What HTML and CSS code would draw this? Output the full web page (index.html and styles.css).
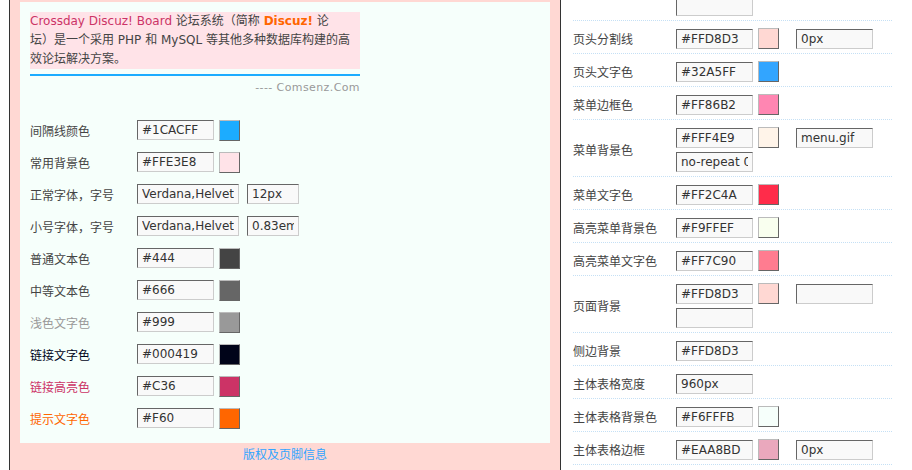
FILE: index.html
```html
<!DOCTYPE html>
<html lang="zh-CN">
  <head>
    <meta charset="UTF-8" />
    <title>风格设置</title>
    <link rel="stylesheet" href="styles.css">
  </head>
  <body>
    <div class="page">
      <div class="side">
        <div class="panel">
          <div class="intro">
            <span class="brand">Crossday Discuz! Board</span> 论坛系统（简称 <b class="hint">Discuz!</b> 论<br />
            坛）是一个采用 PHP 和 MySQL 等其他多种数据库构建的高<br />
            效论坛解决方案。
          </div>
          <div class="credit">---- Comsenz.Com</div>

          <div class="form">
            <div class="row">
              <span class="label">间隔线颜色</span>
              <input class="in" type="text" value="#1CACFF" />
              <span class="swatch" style="background:#1CACFF"></span>
            </div>
            <div class="row">
              <span class="label">常用背景色</span>
              <input class="in" type="text" value="#FFE3E8" />
              <span class="swatch" style="background:#FFE3E8"></span>
            </div>
            <div class="row">
              <span class="label">正常字体，字号</span>
              <input class="in wide" type="text" value="Verdana,Helvetica,Arial" />
              <input class="in small" type="text" value="12px" />
            </div>
            <div class="row">
              <span class="label">小号字体，字号</span>
              <input class="in wide" type="text" value="Verdana,Helvetica,Arial" />
              <input class="in small" type="text" value="0.83em" />
            </div>
            <div class="row">
              <span class="label">普通文本色</span>
              <input class="in" type="text" value="#444" />
              <span class="swatch" style="background:#444"></span>
            </div>
            <div class="row">
              <span class="label">中等文本色</span>
              <input class="in" type="text" value="#666" />
              <span class="swatch" style="background:#666"></span>
            </div>
            <div class="row">
              <span class="label light">浅色文字色</span>
              <input class="in" type="text" value="#999" />
              <span class="swatch" style="background:#999"></span>
            </div>
            <div class="row">
              <span class="label link">链接文字色</span>
              <input class="in" type="text" value="#000419" />
              <span class="swatch" style="background:#000419"></span>
            </div>
            <div class="row">
              <span class="label highlight">链接高亮色</span>
              <input class="in" type="text" value="#C36" />
              <span class="swatch" style="background:#C36"></span>
            </div>
            <div class="row">
              <span class="label hint">提示文字色</span>
              <input class="in" type="text" value="#F60" />
              <span class="swatch" style="background:#F60"></span>
            </div>
          </div>
        </div>
        <div class="foot">版权及页脚信息</div>
      </div>

      <div class="main">
        <!-- 上面的行已滚出窗口 -->
        <div class="item">
          <span class="label"></span>
          <div class="ctrl">
            <input class="in" type="text" value="" />
          </div>
        </div>
        <div class="item">
          <span class="label">页头分割线</span>
          <div class="ctrl">
            <input class="in" type="text" value="#FFD8D3" />
            <span class="swatch" style="background:#FFD8D3"></span>
            <input class="in extra" type="text" value="0px" />
          </div>
        </div>
        <div class="item">
          <span class="label">页头文字色</span>
          <div class="ctrl">
            <input class="in" type="text" value="#32A5FF" />
            <span class="swatch" style="background:#32A5FF"></span>
          </div>
        </div>
        <div class="item">
          <span class="label">菜单边框色</span>
          <div class="ctrl">
            <input class="in" type="text" value="#FF86B2" />
            <span class="swatch" style="background:#FF86B2"></span>
          </div>
        </div>
        <div class="item">
          <span class="label">菜单背景色</span>
          <div class="ctrl">
            <input class="in" type="text" value="#FFF4E9" />
            <span class="swatch" style="background:#FFF4E9"></span>
            <input class="in extra" type="text" value="menu.gif" />
            <input class="in" type="text" value="no-repeat 0 0" />
          </div>
        </div>
        <div class="item">
          <span class="label">菜单文字色</span>
          <div class="ctrl">
            <input class="in" type="text" value="#FF2C4A" />
            <span class="swatch" style="background:#FF2C4A"></span>
          </div>
        </div>
        <div class="item">
          <span class="label">高亮菜单背景色</span>
          <div class="ctrl">
            <input class="in" type="text" value="#F9FFEF" />
            <span class="swatch" style="background:#F9FFEF"></span>
          </div>
        </div>
        <div class="item">
          <span class="label">高亮菜单文字色</span>
          <div class="ctrl">
            <input class="in" type="text" value="#FF7C90" />
            <span class="swatch" style="background:#FF7C90"></span>
          </div>
        </div>
        <div class="item">
          <span class="label">页面背景</span>
          <div class="ctrl">
            <input class="in" type="text" value="#FFD8D3" />
            <span class="swatch" style="background:#FFD8D3"></span>
            <input class="in extra" type="text" value="" />
            <input class="in" type="text" value="" />
          </div>
        </div>
        <div class="item">
          <span class="label">侧边背景</span>
          <div class="ctrl">
            <input class="in" type="text" value="#FFD8D3" />
          </div>
        </div>
        <div class="item">
          <span class="label">主体表格宽度</span>
          <div class="ctrl">
            <input class="in" type="text" value="960px" />
          </div>
        </div>
        <div class="item">
          <span class="label">主体表格背景色</span>
          <div class="ctrl">
            <input class="in" type="text" value="#F6FFFB" />
            <span class="swatch" style="background:#F6FFFB"></span>
          </div>
        </div>
        <div class="item">
          <span class="label">主体表格边框</span>
          <div class="ctrl">
            <input class="in" type="text" value="#EAA8BD" />
            <span class="swatch" style="background:#EAA8BD"></span>
            <input class="in extra" type="text" value="0px" />
          </div>
        </div>
      </div>
    </div>
  </body>
</html>
```

FILE: styles.css
```css
body {
  margin: 0;
  padding-left: 9px;
  background: #fff;
  color: #444;
  font: 12px "DejaVu Sans", "Noto Sans CJK SC", sans-serif;
  overflow: hidden;
}
.page {
  display: flex;
  align-items: flex-start;
}
/* 左侧预览 */
.side {
  width: 552px;
  height: 480px;
  background: #ffd8d3;
  border-left: 1px solid #333;
  border-right: 1px solid #333;
  padding: 2px 10px 0;
  box-sizing: border-box;
}
.panel {
  background: #f6fffb;
  padding: 10px 10px 9px;
}
.intro {
  width: 330px;
  height: 57px;
  line-height: 19px;
  white-space: nowrap;
  background: #ffe3e8;
}
.brand {
  color: #c36;
}
.hint {
  color: #f60;
}
.light {
  color: #999;
}
.link {
  color: #000419;
}
.highlight {
  color: #c36;
}
.credit {
  width: 330px;
  margin-top: 5px;
  padding-top: 4px;
  border-top: 2px solid #1cacff;
  line-height: 16px;
  text-align: right;
  font-size: 11px;
  letter-spacing: 0.4px;
  color: #999;
}
.form {
  margin-top: 18px;
}
.row {
  display: flex;
  align-items: center;
  height: 32px;
}
.row .label {
  width: 107px;
}
.in {
  width: 77px;
  height: 20px;
  box-sizing: border-box;
  margin: 0;
  padding: 0 4px;
  background: #f9f9f9;
  border: 1px solid;
  border-color: #666 #ccc #ccc #666;
  font: 12px "DejaVu Sans", "Noto Sans CJK SC", sans-serif;
  color: #333;
}
.in.wide {
  width: 102px;
}
.in.small {
  width: 52px;
  margin-left: 8px;
}
.swatch {
  width: 21px;
  height: 21px;
  box-sizing: border-box;
  margin-left: 5px;
  border: 1px solid;
  border-color: #bbb #666 #666 #bbb;
}
.foot {
  height: 27px;
  line-height: 24px;
  text-align: center;
  color: #32a5ff;
}
/* 右侧设置 */
.main {
  width: 319px;
  margin-left: 12px;
  margin-top: -12px;
}
.item {
  display: flex;
  align-items: center;
  padding: 7px 0 4px;
  border-bottom: 1px dotted #c5e0f5;
}
.item .label {
  width: 103px;
  flex-shrink: 0;
}
.ctrl {
  display: flex;
  flex-wrap: wrap;
  align-items: center;
  row-gap: 4px;
  min-height: 21px;
  width: 216px;
}
.in.extra {
  margin-left: 17px;
}
```
